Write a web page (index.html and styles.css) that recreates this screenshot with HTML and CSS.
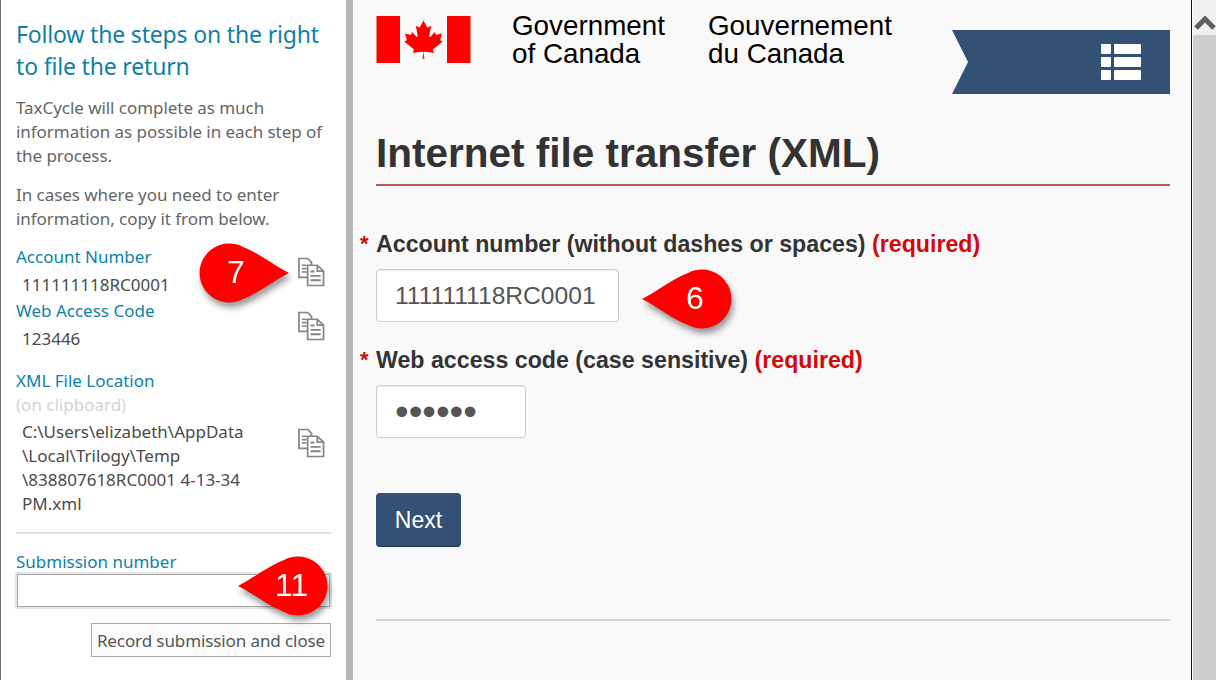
FILE: index.html
```html
<!DOCTYPE html>
<html>
    <head>
        <meta charset="utf-8">
        <title>Internet file transfer (XML)</title>
        <link rel="stylesheet" href="styles.css">
    </head>
    <body>
        <div class="app">
            <div class="sidebar">
                <h2 class="sideTitle">Follow the steps on the right to file the return</h2>
                <p class="sideText">TaxCycle will complete as much information as possible in each step of the process.</p>
                <p class="sideText">In cases where you need to enter information, copy it from below.</p>

                <div class="copyRow rowAccount">
                    <div class="copyInfo">
                        <div class="fieldName">Account Number</div>
                        <div class="fieldValue">111111118RC0001</div>
                    </div>
                    <svg class="copyIcon" viewBox="0 0 28 30"><use href="#copy"></use></svg>
                </div>
                <div class="copyRow rowCode">
                    <div class="copyInfo">
                        <div class="fieldName">Web Access Code</div>
                        <div class="fieldValue">123446</div>
                    </div>
                    <svg class="copyIcon" viewBox="0 0 28 30"><use href="#copy"></use></svg>
                </div>
                <div class="fieldName xmlName">XML File Location</div>
                <div class="fieldNote">(on clipboard)</div>
                <div class="copyRow rowXml">
                    <div class="fieldValue xmlPath">C:\Users\elizabeth\AppData<br>\Local\Trilogy\Temp<br>\838807618RC0001 4-13-34<br>PM.xml</div>
                    <svg class="copyIcon" viewBox="0 0 28 30"><use href="#copy"></use></svg>
                </div>

                <hr class="sideRule">
                <label class="fieldName" for="submission">Submission number</label>
                <input class="submissionInput" id="submission" type="text">
                <div class="recordRow">
                    <button class="recordButton">Record submission and close</button>
                </div>
            </div>
            <div class="splitter"></div>
            <div class="main">
                <div class="header">
                    <svg class="flag" viewBox="0 0 96 48">
                        <rect x="0" y="0" width="24" height="48" fill="#ff0000"></rect>
                        <rect x="72" y="0" width="24" height="48" fill="#ff0000"></rect>
                        <path transform="translate(3.8 0.4) scale(0.92)" fill="#ff0000" d="M48 4.500 L44.200 11.600 C43.800 12.400 43 12.300 42.200 11.900 L39.500 10.500 L41.500 21.200 C41.900 23.200 40.600 23.200 40 22.400 L35.300 17.200 L34.500 19.800 C34.400 20.200 34 20.500 33.400 20.400 L27.500 19.100 L29.100 24.800 C29.400 26 29.700 26.500 28.800 26.900 L26.700 27.900 L36.900 36.200 C37.300 36.500 37.500 37.100 37.300 37.700 L36.400 40.500 C39.900 40.100 43.100 39.700 46.700 39.300 C47.200 39.300 47.900 39.700 47.900 40.300 L46.900 47 L49.100 47 L48.100 40.300 C48.100 39.700 48.800 39.300 49.300 39.300 C52.900 39.700 56.100 40.100 59.600 40.500 L58.700 37.700 C58.500 37.100 58.700 36.500 59.100 36.200 L69.300 27.900 L67.200 26.900 C66.300 26.500 66.600 26 66.900 24.800 L68.500 19.100 L62.600 20.400 C62 20.500 61.600 20.200 61.500 19.800 L60.700 17.200 L56 22.400 C55.400 23.200 54.100 23.200 54.500 21.200 L56.500 10.500 L53.800 11.900 C53 12.300 52.200 12.400 51.800 11.600 Z"></path>
                    </svg>
                    <div class="govName nameEn">Government<br>of Canada</div>
                    <div class="govName nameFr">Gouvernement<br>du Canada</div>
                    <div class="menuBand">
                        <div class="menuIcon">
                            <span class="iconCell"></span><span class="iconBar"></span>
                            <span class="iconCell"></span><span class="iconBar"></span>
                            <span class="iconCell"></span><span class="iconBar"></span>
                        </div>
                    </div>
                </div>

                <h1 class="pageTitle">Internet file transfer (XML)</h1>

                <div class="formField">
                    <div class="formLabel"><span class="star">*</span>Account number (without dashes or spaces) <span class="required">(required)</span></div>
                    <input class="formInput inputAccount" type="text" value="111111118RC0001">
                </div>
                <div class="formField">
                    <div class="formLabel"><span class="star">*</span>Web access code (case sensitive) <span class="required">(required)</span></div>
                    <input class="formInput inputCode" type="password" value="123446">
                </div>

                <button class="nextButton">Next</button>
                <hr class="mainRule">
            </div>
            <div class="scrollbar">
                <div class="scrollUp">
                    <svg viewBox="0 0 22 16" class="scrollArrow"><path d="M2 14 L11 5 L20 14" fill="none" stroke="#5f5f5f" stroke-width="5"></path></svg>
                </div>
                <div class="scrollTrack"></div>
            </div>
        </div>

        <!-- callouts sit over the page -->
        <div class="callout call7"><svg viewBox="0 0 92 60"><use href="#dropRight"></use></svg><span class="calloutNum">7</span></div>
        <div class="callout call6"><svg viewBox="0 0 92 60"><use href="#dropLeft"></use></svg><span class="calloutNum">6</span></div>
        <div class="callout call11"><svg viewBox="0 0 92 60"><use href="#dropLeft"></use></svg><span class="calloutNum">11</span></div>

        <svg class="defs" width="0" height="0">
            <defs>
                <g id="copy" fill="none" stroke="#858585" stroke-width="1.8">
                    <path d="M10 20.500 H1 V1 H10 L14 5 V8"></path>
                    <path d="M4 8 H9 M4 11.500 H9 M4 15 H9"></path>
                    <path fill="#ffffff" d="M10 8 H20 L26.500 14 V29 H10 Z"></path>
                    <path d="M20 8 V14 H26.500"></path>
                    <path stroke-width="2" d="M13 14.500 H17 M13 19 H23.500 M13 23.500 H23.500"></path>
                </g>
                <path id="dropRight" fill="#ff0000" d="M90 30 C74 22 60 10 44 4 A29.500 29.500 0 1 0 44 56 C60 50 74 38 90 30 Z"></path>
                <path id="dropLeft" fill="#ff0000" d="M2 30 C18 22 32 10 48 4 A29.500 29.500 0 1 1 48 56 C32 50 18 38 2 30 Z"></path>
            </defs>
        </svg>
    </body>
</html>
```

FILE: styles.css
```css
html, body { margin: 0; height: 100%; overflow: hidden; }
body { background: #ffffff; font-family: "Noto Sans", "Open Sans", sans-serif; }

.app {
    display: flex;
    height: 680px;
    border-left: 1px solid #6f6f6f;
    box-sizing: border-box;
}

/* left panel */
.sidebar {
    flex: 0 0 315px;
    padding: 1px 15px 0 15px;
    background: #ffffff;
    overflow: hidden;
}
.sideTitle {
    margin: 17px 0 0 0;
    font-size: 23px;
    font-weight: 400;
    line-height: 32px;
    color: #0f7fa5;
    letter-spacing: -0.17px;
}
.sideText {
    margin: 15px 0 0 0;
    font-size: 17px;
    line-height: 24px;
    color: #666666;
    letter-spacing: -0.05px;
}
.sideTitle + .sideText { margin-top: 14px; }
.copyRow {
    display: flex;
    justify-content: space-between;
    align-items: flex-start;
}
.rowAccount { margin-top: 14px; }
.rowCode { margin-top: 2px; }
.rowXml { margin-top: 3px; }
.copyIcon {
    width: 27px;
    height: 30px;
    margin: 12px 6px 0 0;
    flex: none;
}
.rowXml .copyIcon { margin-top: 8px; }
.fieldName {
    display: block;
    font-size: 17px;
    line-height: 24px;
    color: #0f7fa5;
}
.fieldValue {
    padding-left: 6px;
    margin-top: 4px;
    font-size: 17px;
    line-height: 24px;
    color: #4a4a4a;
}
.xmlName { margin-top: 18px; }
.fieldNote {
    font-size: 17px;
    line-height: 24px;
    color: #d4d4d4;
}
.xmlPath { margin-top: 0; }
.sideRule {
    margin: 16px 0 16px 0;
    border: 0;
    height: 2px;
    background: #e0e0e0;
}
.submissionInput {
    display: block;
    box-sizing: border-box;
    width: 100%;
    height: 35px;
    margin-top: -1px;
    border: 2px solid #a8a8a8;
    outline: 2px solid #e4e4e4;
    outline-offset: -1px;
    background: #ffffff;
}
.recordRow {
    display: flex;
    justify-content: flex-end;
    margin-top: 15px;
}
.recordButton {
    box-sizing: border-box;
    width: 240px;
    height: 34px;
    padding: 0;
    border: 1px solid #a8a8a8;
    border-radius: 0;
    background: #fcfcfc;
    font-family: inherit;
    font-size: 17px;
    color: #555555;
    letter-spacing: -0.1px;
}

.splitter {
    flex: 0 0 7px;
    background: #b9b9b9;
}

/* government page */
.main {
    flex: 0 0 838px;
    box-sizing: border-box;
    padding: 0 21px 0 23px;
    background: #f9f9f9;
    font-family: "Liberation Sans", Arial, sans-serif;
}
.header {
    display: flex;
    align-items: flex-start;
    height: 94px;
}
.flag {
    width: 95px;
    height: 47px;
    margin-top: 16px;
    flex: none;
}
.govName {
    margin-top: 12px;
    font-size: 27.8px;
    line-height: 28px;
    color: #000000;
    white-space: nowrap;
}
.nameEn { margin-left: 41px; width: 196px; }
.nameFr { width: 200px; }
.menuBand {
    display: flex;
    justify-content: flex-end;
    align-items: center;
    box-sizing: border-box;
    width: 218px;
    height: 64px;
    margin-top: 30px;
    margin-left: auto;
    padding-right: 29px;
    background: #335075;
    clip-path: polygon(0 0, 100% 0, 100% 100%, 0 100%, 16px 50%);
}
.menuIcon {
    display: grid;
    grid-template-columns: 10px 27px;
    grid-auto-rows: 10px;
    gap: 3px;
}
.iconCell, .iconBar { background: #ffffff; border-radius: 1px; }

.pageTitle {
    margin: 36px 0 0 0;
    padding-bottom: 8px;
    font-size: 40.5px;
    line-height: 46px;
    font-weight: 700;
    color: #333333;
    border-bottom: 2px solid #b9585d;
}
.formField { margin-top: 46px; }
.formField + .formField { margin-top: 26px; }
.formLabel {
    position: relative;
    font-size: 23.2px;
    line-height: 24px;
    font-weight: 700;
    color: #333333;
}
.star {
    position: absolute;
    left: -16px;
    font-size: 22px;
    color: #d3080c;
}
.required { color: #d3080c; }
.formInput {
    display: block;
    box-sizing: border-box;
    height: 53px;
    margin-top: 13px;
    padding: 0 18px;
    border: 1px solid #cccccc;
    border-radius: 4px;
    background: #ffffff;
    font-family: inherit;
    font-size: 24.6px;
    color: #555555;
    box-shadow: inset 0 1px 1px rgba(0, 0, 0, 0.08);
}
.inputAccount { width: 243px; }
.inputCode { width: 150px; font-size: 39px; }
.nextButton {
    display: block;
    width: 85px;
    height: 54px;
    margin-top: 55px;
    border: 1px solid #335075;
    border-bottom-color: #1f3550;
    border-radius: 4px;
    background: #335075;
    font-family: inherit;
    font-size: 23px;
    color: #ffffff;
}
.mainRule {
    margin: 72px 0 0 0;
    border: 0;
    height: 2px;
    background: #d6d6d6;
}

/* scrollbar */
.scrollbar {
    flex: 1;
    display: flex;
    flex-direction: column;
    border-left: 1px solid #111111;
    padding: 0 2px 0 1px;
    background: #ffffff;
}
.scrollUp {
    height: 35px;
    background: #f0f0f0;
}
.scrollArrow {
    display: block;
    width: 22px;
    height: 16px;
    margin: 14px auto 0 auto;
}
.scrollTrack {
    flex: 1;
    background: #cdcdcd;
}

/* numbered callouts */
.callout {
    position: absolute;
    width: 92px;
    height: 60px;
    filter: drop-shadow(2px 5px 3px rgba(0, 0, 0, 0.4));
}
.callout svg { display: block; width: 100%; height: 100%; }
.calloutNum {
    position: absolute;
    top: 0;
    font-family: "Liberation Sans", Arial, sans-serif;
    font-size: 32px;
    line-height: 58px;
    color: #ffffff;
}
.call7 { left: 199px; top: 243px; }
.call7 .calloutNum { left: 28px; }
.call6 { left: 640px; top: 269px; }
.call6 .calloutNum { left: 46px; }
.call11 { left: 236px; top: 556px; }
.call11 .calloutNum { left: 39px; }
.defs { position: absolute; }
```
